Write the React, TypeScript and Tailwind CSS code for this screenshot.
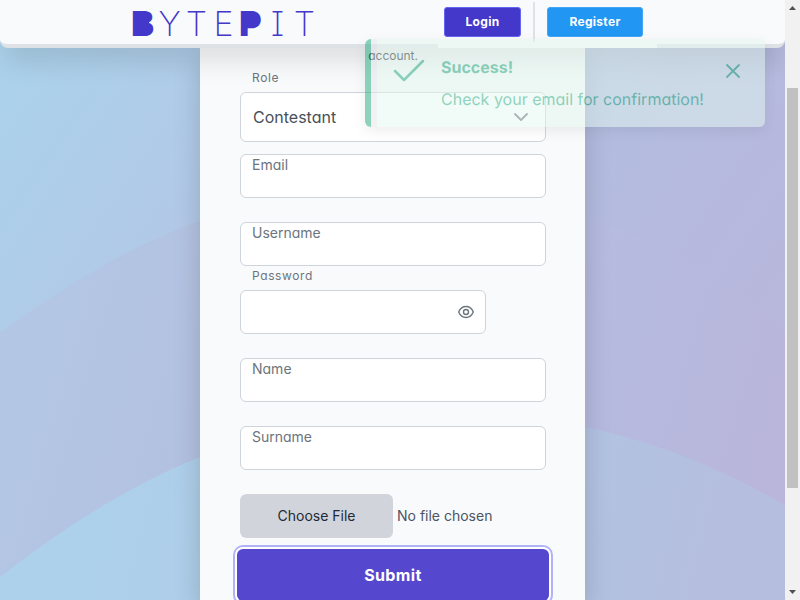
const labelSmall = "block pl-3 text-xs leading-4 tracking-wider text-[#6c757d]";
const field =
  "block w-full rounded-md border border-[#ced4da] bg-white px-3 text-[#495057] outline-none";

function Backdrop() {
  return (
    <svg
      className="absolute inset-0 h-full w-full"
      viewBox="0 0 785 600"
      preserveAspectRatio="none"
      aria-hidden="true"
    >
      <defs>
        <linearGradient id="sky" gradientUnits="userSpaceOnUse" x1="0" y1="60" x2="640" y2="500">
          <stop offset="0" stopColor="#abd2eb" />
          <stop offset="0.3" stopColor="#b1c9e7" />
          <stop offset="0.7" stopColor="#b3bcdf" />
          <stop offset="1" stopColor="#b8b7dc" />
        </linearGradient>
        <linearGradient id="mid" gradientUnits="userSpaceOnUse" x1="40" y1="260" x2="785" y2="480">
          <stop offset="0" stopColor="#b3c7e5" />
          <stop offset="0.25" stopColor="#b3c1e0" />
          <stop offset="0.75" stopColor="#b6badf" />
          <stop offset="1" stopColor="#bab5da" />
        </linearGradient>
        <linearGradient id="low" gradientUnits="userSpaceOnUse" x1="100" y1="450" x2="700" y2="600">
          <stop offset="0" stopColor="#add1eb" />
          <stop offset="0.8" stopColor="#b2c2e1" />
          <stop offset="1" stopColor="#b5bedf" />
        </linearGradient>
      </defs>
      <rect width="785" height="600" fill="url(#sky)" />
      <path d="M0 332C60 290 130 245 200 221C400 150 620 190 785 330V600H0Z" fill="url(#mid)" />
      <path d="M0 577C60 530 130 485 200 457C340 408 460 402 585 427C660 443 725 470 785 505V600H0Z" fill="url(#low)" />
    </svg>
  );
}

function Logo() {
  const thin = "text-center font-extralight";
  const heavy = "relative text-center font-black";
  return (
    <a
      href="#"
      aria-label="BYTEPIT"
      className="grid grid-cols-[repeat(7,27px)] pt-1 text-[34px] leading-[44px] text-[#4338ca] [font-feature-settings:'cv08']"
    >
      <span className={heavy}>
        B<i className="absolute top-[11px] left-2 h-5 w-3 bg-[#4338ca]" />
      </span>
      <span className={thin}>Y</span>
      <span className={thin}>T</span>
      <span className={thin}>E</span>
      <span className={heavy}>
        P<i className="absolute top-[11px] left-2 h-3 w-3 bg-[#4338ca]" />
      </span>
      <span className={thin}>I</span>
      <span className={thin}>T</span>
    </a>
  );
}

function Header() {
  return (
    <header className="relative z-10 rounded-b-lg border-b-4 border-[#dee2e6] bg-slate-50 shadow-[0_20px_25px_-5px_rgba(0,0,0,0.1)]">
      <div className="flex h-11 items-center justify-between pr-32 pl-[129px]">
        <Logo />
        <nav className="-mb-1 flex h-12 items-start bg-slate-50 pr-3.5 pl-1.5">
          <button className="mt-[7px] h-[30px] w-[77px] rounded-[3px] border border-[#6366f1] bg-[#4338ca] text-xs font-bold tracking-wide text-white">
            Login
          </button>
          <span className="mx-3 mt-0.5 h-10 w-0.5 bg-[#dee2e6]" />
          <button className="mt-[7px] h-[30px] w-24 rounded-[3px] border border-[#42a5f5] bg-[#2196f3] text-xs font-bold tracking-wide text-white">
            Register
          </button>
        </nav>
      </div>
    </header>
  );
}

function StackedField({ id, label, type = "text" }: { id: string; label: string; type?: string }) {
  return (
    <div className="relative">
      <input id={id} type={type} className={`${field} h-11 text-sm`} />
      <label htmlFor={id} className="absolute top-0 left-3 text-sm leading-[22px] text-[#6c757d]">
        {label}
      </label>
    </div>
  );
}

function RegisterForm() {
  return (
    <form className="relative mx-auto h-full w-[385px] bg-slate-50 pr-[39px] pl-10 shadow-[0_10px_25px_rgba(0,0,0,0.17)]">
      <p className="pr-32 text-right text-xs leading-4 text-[#212529]">account.</p>
      <div className="mt-1.5">
        <label htmlFor="role" className={labelSmall}>
          Role
        </label>
        <div className="relative mt-1.5">
          <select id="role" className={`${field} h-[50px] appearance-none text-base`}>
            <option>Contestant</option>
          </select>
          <svg className="pointer-events-none absolute top-[18px] right-[18px] h-3.5 w-3.5" viewBox="0 0 14 14" fill="none" stroke="#6c757d" strokeWidth="1.8" strokeLinecap="round" strokeLinejoin="round">
            <path d="M1 4l6 6 6-6" />
          </svg>
        </div>
      </div>
      <div className="mt-3 flex flex-col gap-6">
        <StackedField id="email" label="Email" type="email" />
        <StackedField id="username" label="Username" />
      </div>
      <div className="mt-0.5 mb-6">
        <label htmlFor="password" className={labelSmall}>
          Password
        </label>
        <div className="relative mt-1.5 w-[246px]">
          <input id="password" type="password" className={`${field} h-11 text-sm`} />
          <svg className="absolute top-3.5 right-3 h-4 w-4" viewBox="0 0 16 16" fill="none" stroke="#6c757d" strokeWidth="1.4">
            <path d="M0.7 8C2.3 4.2 5 2.5 8 2.5S13.7 4.2 15.3 8C13.7 11.8 11 13.5 8 13.5S2.3 11.8 0.7 8Z" />
            <circle cx="8" cy="8" r="2.5" />
          </svg>
        </div>
      </div>
      <div className="flex flex-col gap-6">
        <StackedField id="name" label="Name" />
        <StackedField id="surname" label="Surname" />
        <input
          type="file"
          aria-label="Profile picture"
          className="block h-11 w-full rounded-md bg-[#f9fafb] text-sm leading-[44px] text-[#4b5563] file:mr-1 file:h-11 file:w-[153px] file:rounded-md file:border-0 file:bg-[#d1d5db] file:p-0 file:text-sm file:text-[#1f2937]"
        />
      </div>
      <button
        type="button"
        className="-mx-[3px] mt-[11px] h-[52px] w-[312px] rounded-md bg-[#5548ce] text-base font-bold tracking-wide text-white shadow-[0_0_0_2px_#fff,0_0_0_4px_#b0b3f8]"
      >
        Submit
      </button>
    </form>
  );
}

function Toast() {
  return (
    <div
      role="alert"
      className="absolute top-[39px] right-5 z-20 h-[88px] w-[400px] rounded-md border-l-[6px] border-[#1ea97c] bg-[#e6e6ec] pl-1.5 text-[#1ea97c] opacity-50 shadow-[0_4px_12px_rgba(0,0,0,0.12)]"
    >
      <div className="relative flex h-full rounded-r-md bg-[#e4f8f0]">
        <svg className="mt-[18px] ml-4 h-7 w-8" viewBox="0 0 32 28" fill="none" stroke="currentColor" strokeWidth="2.5" strokeLinecap="round" strokeLinejoin="round">
          <path d="M2 14l9 9L30 4" />
        </svg>
        <div className="ml-4 flex-1 pt-4 [text-rendering:geometricPrecision]">
          <p className="text-base leading-6 font-bold">Success!</p>
          <p className="mt-2 text-base leading-6">Check your email for confirmation!</p>
        </div>
        <button aria-label="Close" className="absolute top-6 right-6 h-4 w-4">
          <svg viewBox="0 0 16 16" fill="none" stroke="currentColor" strokeWidth="1.8" strokeLinecap="round">
            <path d="M2 2l12 12M14 2L2 14" />
          </svg>
        </button>
      </div>
    </div>
  );
}

function ScrollTrack() {
  return (
    <div className="flex w-[15px] flex-col items-center justify-between bg-[#f1f1f1]" aria-hidden="true">
      <svg className="h-4 w-[15px]" viewBox="0 0 15 16" fill="#505050">
        <path d="M4 10L7.5 6L11 10Z" />
      </svg>
      <div className="mt-[72px] mb-auto h-[400px] w-[11px] bg-[#c1c1c1]" />
      <svg className="h-4 w-[15px]" viewBox="0 0 15 16" fill="#505050">
        <path d="M4 6L7.5 10L11 6Z" />
      </svg>
    </div>
  );
}

export default function App() {
  return (
    <div className="flex h-screen overflow-hidden font-['Inter',sans-serif] [font-feature-settings:'cv02','cv03','cv04','cv11']">
      <div className="relative flex min-w-0 flex-1 flex-col overflow-hidden">
        <Backdrop />
        <Header />
        <main className="relative min-h-0 flex-1">
          <RegisterForm />
        </main>
        <Toast />
      </div>
      <ScrollTrack />
    </div>
  );
}
